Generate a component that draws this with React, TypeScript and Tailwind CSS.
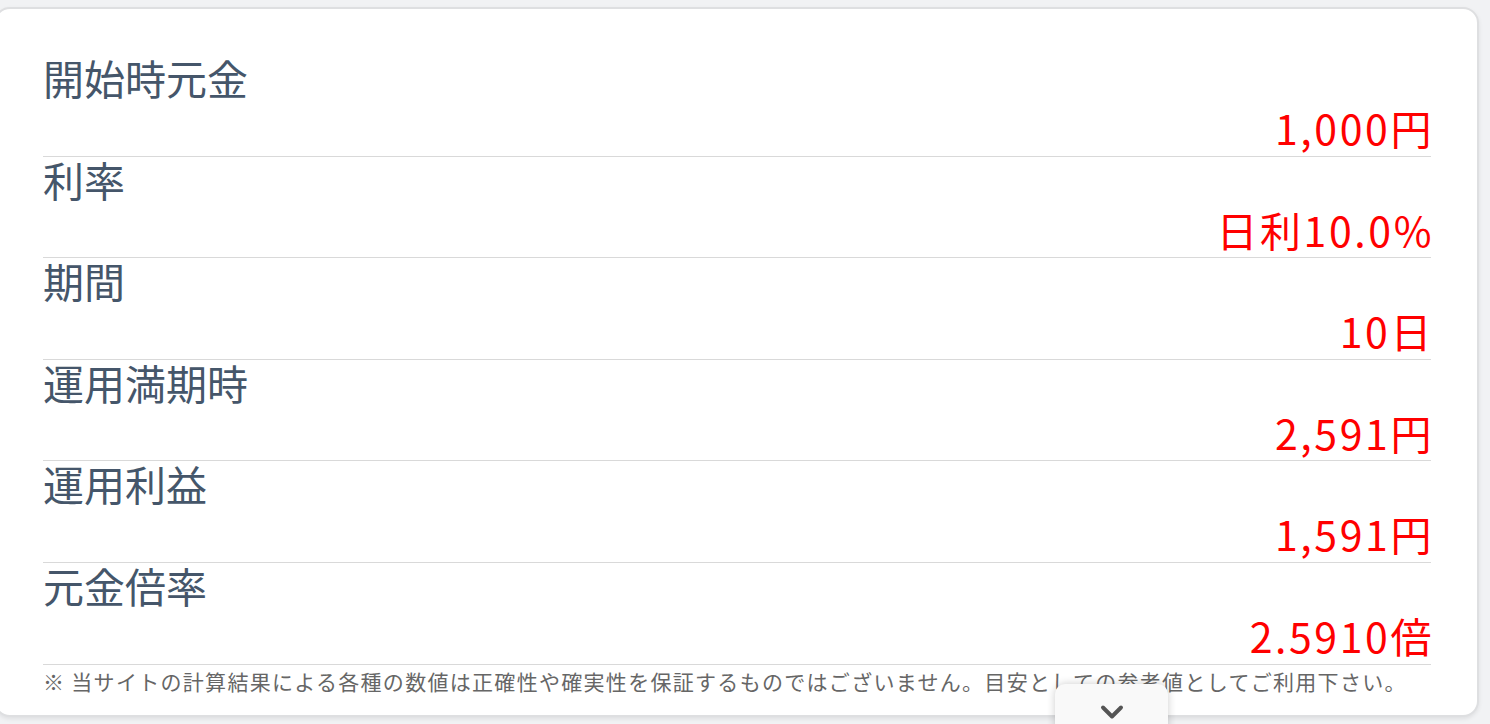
import { ChevronDown } from "lucide-react";

const ROWS = [
  { label: "開始時元金", value: "1,000円" },
  { label: "利率", value: "日利10.0%" },
  { label: "期間", value: "10日" },
  { label: "運用満期時", value: "2,591円" },
  { label: "運用利益", value: "1,591円" },
  { label: "元金倍率", value: "2.5910倍" },
];

export default function App() {
  return (
    <div
      className="relative h-[724px] w-[1490px] overflow-hidden bg-[#f1f2f4] pt-[7px]"
      style={{ fontFamily: '"Noto Sans CJK JP", "Noto Sans", sans-serif' }}
    >
      {/* Result card */}
      <div className="-ml-[6px] h-[710px] w-[1485px] rounded-[16px] border-2 border-[#dedfe1] bg-white pl-[47px] pr-[46px] pt-[46px] shadow-[0_2px_4px_rgba(0,0,0,0.08)]">
        {ROWS.map((row) => (
          <div key={row.label} className="flex h-[101.6px] flex-col border-b border-[#d9d9d9]">
            <div className="h-[50px] text-[41px] leading-[44px] text-[#45566a]">{row.label}</div>
            <div className="-mr-[3px] h-[50px] text-right text-[41px] leading-[44px] tracking-[2.6px] text-[#ff0000]">
              {row.value}
            </div>
          </div>
        ))}

        <p className="pt-[1px] text-[21px] leading-[30px] tracking-[1.3px] text-[#666666]">
          ※ 当サイトの計算結果による各種の数値は正確性や確実性を保証するものではございません。目安としての参考値としてご利用下さい。
        </p>
      </div>

      {/* Collapse toggle */}
      <button className="absolute left-[1055px] top-[684px] flex h-[50px] w-[113px] justify-center rounded-t-[10px] bg-[#f9f9f9] pt-[10px] shadow-[0_0_8px_rgba(0,0,0,0.2)]">
        <ChevronDown className="h-[36px] w-[36px] text-[#555555]" strokeWidth={2.6} />
      </button>
    </div>
  );
}
